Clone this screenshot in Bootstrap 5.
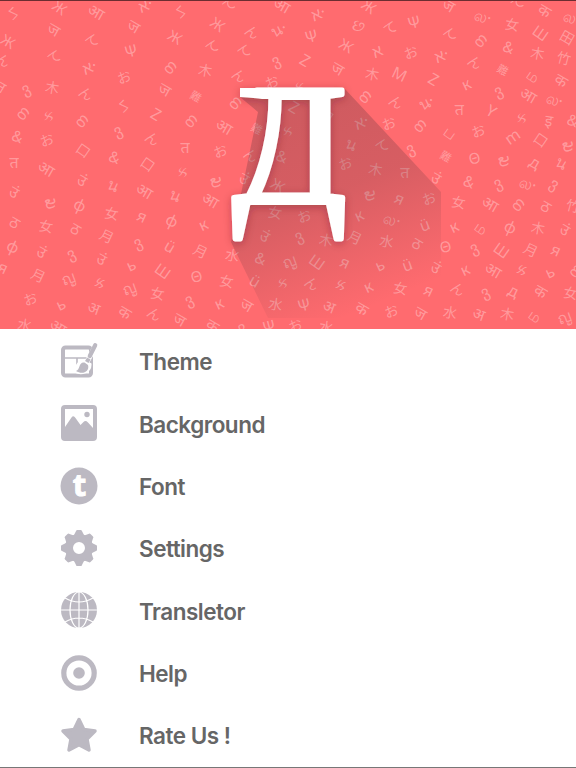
<!DOCTYPE html>
<html lang="en">
<head>
<meta charset="utf-8">
<meta name="viewport" content="width=device-width, initial-scale=1">
<title>Keyboard</title>
<link href="https://cdn.jsdelivr.net/npm/bootstrap@5.3.0/dist/css/bootstrap.min.css" rel="stylesheet">
<style>
body{height:768px;font-family:Inter,"Liberation Sans",sans-serif;color:#666;background:#fff}
.hero{height:329px;background:#ff6b6f}
.hero svg{display:block}
.menu{padding-top:1px}
.menu-row{height:62.33px;padding-left:61px;gap:42px;font-size:22.5px;font-weight:600;letter-spacing:-.5px;line-height:1}
.menu-row span{padding-top:3px}
.menu-row svg{width:36px;height:36px;flex:none;overflow:visible;color:#bcb9c2}
.screen{height:768px;border-bottom:1px solid #777}
.glyphs text{font-family:"Noto Sans","Liberation Sans","Noto Sans CJK JP","DejaVu Sans",sans-serif;text-anchor:middle;dominant-baseline:central}
.logo-letter{font-family:"Liberation Serif",serif;font-size:171px;stroke:#fff;stroke-width:5px;stroke-linejoin:round}
</style>
<script src="https://cdn.jsdelivr.net/npm/bootstrap@5.3.0/dist/js/bootstrap.bundle.min.js"></script>
</head>
<body>
<main class="screen d-flex flex-column overflow-hidden">
<header class="hero flex-shrink-0 overflow-hidden">
<svg width="576" height="329" viewBox="0 0 576 329">
<defs>
<linearGradient id="fade" gradientUnits="userSpaceOnUse" x1="300" y1="120" x2="376" y2="305"><stop offset="0" stop-color="#503038" stop-opacity=".27"/><stop offset=".4" stop-color="#503038" stop-opacity=".23"/><stop offset="1" stop-color="#503038" stop-opacity="0"/></linearGradient>
<filter id="soft" x="-20%" y="-20%" width="140%" height="140%"><feDropShadow dx="0" dy="2" stdDeviation="4" flood-color="#602028" flood-opacity=".35"/></filter>
</defs>
<g class="glyphs" id="glyphs" fill="#fff" fill-opacity=".32"></g>
<path d="M345 89L441 192V318H268L231 242L258 112L240 97Z" fill="url(#fade)"/>
<g filter="url(#soft)" fill="#fff">
<text class="logo-letter" transform="translate(232.5 202) scale(.98 1)">Д</text>
<path d="M240 88H280V99H262Q256 98 240 97Z"/>
</g>
<path d="M0 .5H576" stroke="#6b2d30"/>
</svg>
</header>
<nav class="menu d-flex flex-column">
<div class="menu-row d-flex align-items-center"><svg viewBox="0 0 36 36"><rect x="2" y="4.5" width="28" height="28" rx="2.5" fill="none" stroke="currentColor" stroke-width="4"/><path d="M4 15H28M16 15V29" stroke="currentColor" stroke-width="1.6"/><path d="M35 2L27 17M23 19c-4-1-5 4-9 8 7 4 14 0 14-5z" stroke="#fff" stroke-width="5" fill="#fff" stroke-linecap="round"/><path d="M34.2 2.2L28.8 13" stroke="currentColor" stroke-width="4.2" stroke-linecap="round"/><path d="M27.8 15.5l-2 3.5" stroke="currentColor" stroke-width="4"/><path d="M23.5 19.5c-6-1-4 7-8.5 8.5 6 4 14 1 12-6z" fill="currentColor"/></svg><span>Theme</span></div>
<div class="menu-row d-flex align-items-center"><svg viewBox="0 0 36 36"><path fill="currentColor" fill-rule="evenodd" d="M4 0H32Q36 0 36 4V32Q36 36 32 36H4Q0 36 0 32V4Q0 0 4 0ZM4 4V22L10.5 12.5Q12.5 10 14.5 13L19.5 20L22.5 17Q24.5 15 27 17.5L32 23V4Z"/><circle cx="26" cy="9.5" r="2.7" fill="currentColor"/></svg><span>Background</span></div>
<div class="menu-row d-flex align-items-center"><svg viewBox="0 0 36 36"><circle cx="18" cy="18" r="18.5" fill="currentColor"/><text x="18.2" y="28.3" text-anchor="middle" fill="#fff" stroke="#fff" stroke-width="1" font-size="31" font-weight="700" font-family="Open Sans, sans-serif">t</text></svg><span>Font</span></div>
<div class="menu-row d-flex align-items-center"><svg viewBox="-18 -18 36 36"><circle r="10" fill="none" stroke="currentColor" stroke-width="8"/><g id="teeth" fill="currentColor"></g></svg><span>Settings</span></div>
<div class="menu-row d-flex align-items-center"><svg viewBox="-18 -18 36 36"><circle r="18" fill="currentColor"/><g fill="none" stroke="#fff" stroke-width="1.2"><path d="M0-18V18M-18 0H18M-14-12Q0-4 14-12M-14 12Q0 4 14 12"/><ellipse rx="9" ry="18"/></g></svg><span>Transletor</span></div>
<div class="menu-row d-flex align-items-center"><svg viewBox="-18 -18 36 36"><circle r="15.2" fill="none" stroke="currentColor" stroke-width="5.2"/><circle r="5.8" fill="currentColor"/></svg><span>Help</span></div>
<div class="menu-row d-flex align-items-center"><svg viewBox="-18 -18 36 36"><path d="M0-15.5L4.8-5.5L16-4L8 4L10 15L0 9.8L-10 15L-8 4L-16-4L-4.8-5.5Z" fill="currentColor" stroke="currentColor" stroke-width="3.5" stroke-linejoin="round"/></svg><span>Rate Us !</span></div>
</nav>
</main>
<script>
const NS="http://www.w3.org/2000/svg";
// Each tile: origin x, origin y, then glyph, x and y in thirds of a pixel, rotation
const tiles=[
[0,0,"ㄣ 39 40 25|Ж 180 22 35|आ 289 35 30|א· 436 14 -25|ㄣ 541 35 25|ज 162 88 30|ज 402 78 30|Ж 25 123 30|て 275 122 -30|て 162 170 -30|Ψ 393 152 -15|Ж 526 110 30|ん 10 180 30|א· 268 200 -25|თ 508 200 -50|お 372 231 -20|ვ 76 265 -25|木 157 262 10|ん 258 280 30|ज 495 268 30|त 3 260 30|თ 66 338 -50|ક 145 345 -20|თ 243 361 -50|ㄣ 370 318 25|Z 469 342 30|ვ 352 390 -25|ん 457 415 30|თ 570 361 -50|& 53 408 20|お 140 419 -20|口 250 451 35|& 344 470 20|त 555 440 0|त 42 486 0|口 444 492 35"],
[192,0,"て 110 13 -30|आ 270 15 30|א· 378 40 -25|Ж 532 18 35|Ж 78 72 35|ん 180 95 30|น· 260 88 -25|Ψ 358 108 -15|છ 500 77 20|Ж 464 136 30|て 60 140 -30|て 156 154 -30|א 555 153 -25|木 40 210 10|ვ 250 180 -25|Z 340 180 30|ज 438 205 30|木 541 221 10|ん 141 226 30|お 239 246 -20|ક 322 260 -20|難 12 288 30|თ 127 307 -50|თ 516 288 -50|Z 307 321 30|口 404 346 35|आ 97 379 30|難 195 385 30|ક 285 392 -20|א· 508 365 -25|น 480 433 25|て 570 437 -30|お 85 453 -20|ん 176 465 30|& 270 468 20|お 460 490 -20"],
[384,0,"ज 195 15 30|て 400 8 -30|क 482 31 30|ல· 297 48 15|ல 557 50 15|Ψ 90 66 -15|女 384 73 10|て 18 83 -30|て 197 104 -30|თ 287 120 -50|Ш 470 98 35|田 550 112 30|お 80 157 -20|א· 172 165 -25|& 374 140 20|木 461 159 10|竹 540 174 15|ん 272 186 30|難 357 209 30|M 47 222 25|Z 149 237 30|к 246 251 -25|ம 447 227 35|क 532 240 30|ვ 342 271 -25|आ 434 285 30|ல· 512 297 15|ん 36 305 30|น· 126 306 -25|त 226 328 0|Y 322 332 30|ક 412 351 -20|इ 495 361 10|お 14 370 -20|თ 105 375 -50|ப 198 397 35|お 283 392 -20|m 385 409 -35|口 471 419 35|ვ 78 444 -25|難 186 468 30|Θ 271 473 -15|ىع 356 469 -20|ىع 548 425 -20|д 454 487 30|น 532 488 30|& 567 360 20"],
[0,165,"आ 139 10 30|ક 547 20 -20|उं 247 45 30|น 340 61 25|आ 434 77 30|น 526 90 25|उं 43 80 30|ىع 148 101 -20|ф 240 119 25|女 335 145 10|я 427 153 25|ф 516 166 25|ठ 44 171 30|女 138 183 10|ठ 227 191 30|月 321 213 25|ვ 412 231 -25|ü 510 244 30|ф 39 244 25|उं 125 260 30|ვ 212 265 -25|उं 305 281 30|ь 393 299 -25|Ш 489 317 35|я 10 307 25|月 115 331 25|ญ 206 338 -20|ક 297 352 0|ญ 388 368 -20|女 473 385 10|お 91 401 -20|ь 182 417 -25|अ 282 428 20|क 375 441 30|ん 463 446 30|ज 540 463 30|水 74 479 10|आ 175 485 30|ვ 566 403 -25"],
[192,165,"ىع 68 37 -20|उं 157 40 30|Ж 258 60 30|木 551 12 10|ىع 530 77 -20|आ 56 105 30|女 249 142 10|お 337 153 -20|к 500 150 -25|к 33 178 -25|उं 219 212 30|ვ 319 212 -25|木 402 224 10|月 489 217 25|月 26 258 25|水 121 270 10|& 206 279 20|ญ 293 289 -20|Ш 376 290 35|я 460 291 25|ь 563 299 -25|Θ 13 333 -15|女 104 348 10|ü 189 347 30|ક 270 353 -20|ん 359 355 30|ક 444 357 0|к 528 364 -25|к 80 414 -25|ज 165 419 30|水 251 417 10|Ψ 336 419 -15|अ 412 424 20|क 510 430 30|क 62 481 30|ვ 148 486 -25|Ψ 231 484 -15|お 310 481 -20|水 402 486 10"],
[384,165,"त 62 22 0|उं 157 38 30|& 256 49 20|ვ 340 53 -25|ல· 432 55 15|ვ 512 55 30|я 47 100 25|お 135 100 -20|女 224 111 10|आ 319 116 30|თ 400 117 -50|ठ 486 123 30|竹 568 122 15|ல· 25 162 15|ü 122 179 -20|к 209 184 -25|ம 292 187 35|ф 380 185 25|木 462 188 10|उं 543 193 30|水 8 228 10|ठ 100 235 30|Θ 184 244 -15|ვ 269 247 -25|Ш 353 255 35|月 441 254 25|я 517 254 25|ü 69 299 -20|उं 156 307 30|к 242 313 -25|आ 328 315 30|ક 412 313 0|ь 497 320 -25|თ 572 316 -50|女 49 369 10|я 135 375 25|ん 221 371 30|ვ 302 380 -25|д 389 377 25|क 470 378 30|女 560 383 10|お 22 438 -20|ज 110 443 30|水 198 442 10|अ 285 446 20|木 370 446 10|ம 453 453 35|ญ 541 455 -20"]];
const g=document.getElementById("glyphs");
for(const [ox,oy,list] of tiles)for(const s of list.split("|")){
 const [ch,x,y,r]=s.split(" "),t=document.createElementNS(NS,"text");
 t.textContent=ch;t.setAttribute("font-size",ch=="難"?11:/[\u3040-\u9fff]/.test(ch)?14:/[ШΘЖ&ம]/.test(ch)?15:16);
 t.setAttribute("transform",`translate(${(ox+x/3).toFixed(1)} ${(oy+y/3).toFixed(1)}) rotate(${r})`);
 g.append(t);
}
for(let i=0;i<8;i++){const p=document.createElementNS(NS,"path");p.setAttribute("d","M-5.5-12L-3.2-16.5Q-3-18-1.8-18H1.8Q3-18 3.2-16.5L5.5-12Z");p.setAttribute("transform",`rotate(${i*45})`);document.getElementById("teeth").append(p)}
</script>
</body>
</html>
